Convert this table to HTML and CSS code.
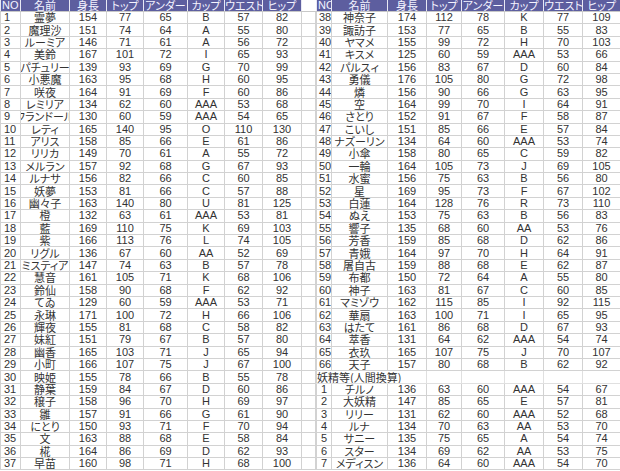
FILE: index.html
```html
<!DOCTYPE html>
<html lang="ja">
<head>
<meta charset="utf-8">
<title>身長表</title>
<link rel="stylesheet" href="styles.css">
</head>
<body>
<div class="sheet">
<table class="tbl left">
<colgroup>
<col class="c-no"><col class="c-nm"><col class="c-h"><col class="c-t"><col class="c-u"><col class="c-c"><col class="c-w"><col class="c-p"><col class="c-gap">
</colgroup>
<thead>
<tr><th class="no">NO</th><th>名前</th><th>身長</th><th>トップ</th><th>アンダー</th><th>カップ</th><th>ウエスト</th><th>ヒップ</th><th class="gap"></th></tr>
</thead>
<tbody>
<tr><td class="no">1</td><td class="nm"><div>霊夢</div></td><td>154</td><td>77</td><td>65</td><td>B</td><td>57</td><td>82</td><td class="gap"></td></tr>
<tr><td class="no">2</td><td class="nm"><div>魔理沙</div></td><td>151</td><td>74</td><td>64</td><td>A</td><td>55</td><td>80</td><td class="gap"></td></tr>
<tr><td class="no">3</td><td class="nm"><div>ルーミア</div></td><td>146</td><td>71</td><td>61</td><td>A</td><td>56</td><td>72</td><td class="gap"></td></tr>
<tr><td class="no">4</td><td class="nm"><div>美鈴</div></td><td>167</td><td>101</td><td>72</td><td>I</td><td>65</td><td>93</td><td class="gap"></td></tr>
<tr><td class="no">5</td><td class="nm"><div>パチュリー</div></td><td>139</td><td>93</td><td>69</td><td>G</td><td>70</td><td>99</td><td class="gap"></td></tr>
<tr><td class="no">6</td><td class="nm"><div>小悪魔</div></td><td>163</td><td>95</td><td>68</td><td>H</td><td>60</td><td>95</td><td class="gap"></td></tr>
<tr><td class="no">7</td><td class="nm"><div>咲夜</div></td><td>164</td><td>91</td><td>69</td><td>F</td><td>60</td><td>86</td><td class="gap"></td></tr>
<tr><td class="no">8</td><td class="nm"><div>レミリア</div></td><td>134</td><td>62</td><td>60</td><td>AAA</td><td>53</td><td>68</td><td class="gap"></td></tr>
<tr><td class="no">9</td><td class="nm"><div>フランドール</div></td><td>130</td><td>60</td><td>59</td><td>AAA</td><td>54</td><td>65</td><td class="gap"></td></tr>
<tr><td class="no">10</td><td class="nm"><div>レティ</div></td><td>165</td><td>140</td><td>95</td><td>O</td><td>110</td><td>130</td><td class="gap"></td></tr>
<tr><td class="no">11</td><td class="nm"><div>アリス</div></td><td>158</td><td>85</td><td>66</td><td>E</td><td>61</td><td>86</td><td class="gap"></td></tr>
<tr><td class="no">12</td><td class="nm"><div>リリカ</div></td><td>149</td><td>70</td><td>61</td><td>A</td><td>55</td><td>72</td><td class="gap"></td></tr>
<tr><td class="no">13</td><td class="nm"><div>メルラン</div></td><td>157</td><td>92</td><td>68</td><td>G</td><td>67</td><td>93</td><td class="gap"></td></tr>
<tr><td class="no">14</td><td class="nm"><div>ルナサ</div></td><td>156</td><td>82</td><td>66</td><td>C</td><td>60</td><td>85</td><td class="gap"></td></tr>
<tr><td class="no">15</td><td class="nm"><div>妖夢</div></td><td>153</td><td>81</td><td>66</td><td>C</td><td>57</td><td>88</td><td class="gap"></td></tr>
<tr><td class="no">16</td><td class="nm"><div>幽々子</div></td><td>163</td><td>140</td><td>80</td><td>U</td><td>81</td><td>125</td><td class="gap"></td></tr>
<tr><td class="no">17</td><td class="nm"><div>橙</div></td><td>132</td><td>63</td><td>61</td><td>AAA</td><td>53</td><td>81</td><td class="gap"></td></tr>
<tr><td class="no">18</td><td class="nm"><div>藍</div></td><td>169</td><td>110</td><td>75</td><td>K</td><td>69</td><td>103</td><td class="gap"></td></tr>
<tr><td class="no">19</td><td class="nm"><div>紫</div></td><td>166</td><td>113</td><td>76</td><td>L</td><td>74</td><td>105</td><td class="gap"></td></tr>
<tr><td class="no">20</td><td class="nm"><div>リグル</div></td><td>136</td><td>67</td><td>60</td><td>AA</td><td>52</td><td>69</td><td class="gap"></td></tr>
<tr><td class="no">21</td><td class="nm"><div>ミスティア</div></td><td>147</td><td>74</td><td>63</td><td>B</td><td>57</td><td>78</td><td class="gap"></td></tr>
<tr><td class="no">22</td><td class="nm"><div>慧音</div></td><td>161</td><td>105</td><td>71</td><td>K</td><td>68</td><td>106</td><td class="gap"></td></tr>
<tr><td class="no">23</td><td class="nm"><div>鈴仙</div></td><td>158</td><td>90</td><td>68</td><td>F</td><td>62</td><td>92</td><td class="gap"></td></tr>
<tr><td class="no">24</td><td class="nm"><div>てゐ</div></td><td>129</td><td>60</td><td>59</td><td>AAA</td><td>53</td><td>71</td><td class="gap"></td></tr>
<tr><td class="no">25</td><td class="nm"><div>永琳</div></td><td>171</td><td>100</td><td>72</td><td>H</td><td>66</td><td>106</td><td class="gap"></td></tr>
<tr><td class="no">26</td><td class="nm"><div>輝夜</div></td><td>155</td><td>81</td><td>68</td><td>C</td><td>58</td><td>82</td><td class="gap"></td></tr>
<tr><td class="no">27</td><td class="nm"><div>妹紅</div></td><td>151</td><td>79</td><td>67</td><td>B</td><td>57</td><td>80</td><td class="gap"></td></tr>
<tr><td class="no">28</td><td class="nm"><div>幽香</div></td><td>165</td><td>103</td><td>71</td><td>J</td><td>65</td><td>94</td><td class="gap"></td></tr>
<tr><td class="no">29</td><td class="nm"><div>小町</div></td><td>166</td><td>107</td><td>75</td><td>J</td><td>67</td><td>100</td><td class="gap"></td></tr>
<tr><td class="no">30</td><td class="nm"><div>映姫</div></td><td>155</td><td>78</td><td>66</td><td>B</td><td>55</td><td>78</td><td class="gap"></td></tr>
<tr><td class="no">31</td><td class="nm"><div>静葉</div></td><td>159</td><td>84</td><td>67</td><td>D</td><td>60</td><td>86</td><td class="gap"></td></tr>
<tr><td class="no">32</td><td class="nm"><div>穣子</div></td><td>158</td><td>96</td><td>70</td><td>H</td><td>69</td><td>97</td><td class="gap"></td></tr>
<tr><td class="no">33</td><td class="nm"><div>雛</div></td><td>157</td><td>91</td><td>66</td><td>G</td><td>61</td><td>90</td><td class="gap"></td></tr>
<tr><td class="no">34</td><td class="nm"><div>にとり</div></td><td>150</td><td>93</td><td>71</td><td>F</td><td>70</td><td>94</td><td class="gap"></td></tr>
<tr><td class="no">35</td><td class="nm"><div>文</div></td><td>163</td><td>88</td><td>68</td><td>E</td><td>58</td><td>84</td><td class="gap"></td></tr>
<tr><td class="no">36</td><td class="nm"><div>椛</div></td><td>164</td><td>86</td><td>69</td><td>D</td><td>62</td><td>93</td><td class="gap"></td></tr>
<tr><td class="no">37</td><td class="nm"><div>早苗</div></td><td>160</td><td>98</td><td>71</td><td>H</td><td>68</td><td>100</td><td class="gap"></td></tr>
</tbody>
</table>
<table class="tbl right">
<colgroup>
<col class="r-no"><col class="r-nm"><col class="r-h"><col class="r-t"><col class="r-u"><col class="r-c"><col class="r-w"><col class="r-p">
</colgroup>
<thead>
<tr><th class="no">NO</th><th>名前</th><th>身長</th><th>トップ</th><th>アンダー</th><th>カップ</th><th>ウエスト</th><th>ヒップ</th></tr>
</thead>
<tbody>
<tr><td class="no">38</td><td class="nm"><div>神奈子</div></td><td>174</td><td>112</td><td>78</td><td>K</td><td>77</td><td>109</td></tr>
<tr><td class="no">39</td><td class="nm"><div>諏訪子</div></td><td>153</td><td>77</td><td>65</td><td>B</td><td>55</td><td>83</td></tr>
<tr><td class="no">40</td><td class="nm"><div>ヤマメ</div></td><td>155</td><td>99</td><td>72</td><td>H</td><td>70</td><td>103</td></tr>
<tr><td class="no">41</td><td class="nm"><div>キスメ</div></td><td>125</td><td>60</td><td>59</td><td>AAA</td><td>53</td><td>66</td></tr>
<tr><td class="no">42</td><td class="nm"><div>パルスィ</div></td><td>156</td><td>83</td><td>67</td><td>D</td><td>60</td><td>84</td></tr>
<tr><td class="no">43</td><td class="nm"><div>勇儀</div></td><td>176</td><td>105</td><td>80</td><td>G</td><td>72</td><td>98</td></tr>
<tr><td class="no">44</td><td class="nm"><div>燐</div></td><td>156</td><td>90</td><td>66</td><td>G</td><td>63</td><td>95</td></tr>
<tr><td class="no">45</td><td class="nm"><div>空</div></td><td>164</td><td>99</td><td>70</td><td>I</td><td>64</td><td>91</td></tr>
<tr><td class="no">46</td><td class="nm"><div>さとり</div></td><td>152</td><td>91</td><td>67</td><td>F</td><td>58</td><td>87</td></tr>
<tr><td class="no">47</td><td class="nm"><div>こいし</div></td><td>151</td><td>85</td><td>66</td><td>E</td><td>57</td><td>84</td></tr>
<tr><td class="no">48</td><td class="nm"><div>ナズーリン</div></td><td>134</td><td>64</td><td>60</td><td>AAA</td><td>53</td><td>74</td></tr>
<tr><td class="no">49</td><td class="nm"><div>小傘</div></td><td>158</td><td>80</td><td>65</td><td>C</td><td>59</td><td>82</td></tr>
<tr><td class="no">50</td><td class="nm"><div>一輪</div></td><td>164</td><td>105</td><td>73</td><td>J</td><td>69</td><td>105</td></tr>
<tr><td class="no">51</td><td class="nm"><div>水蜜</div></td><td>156</td><td>75</td><td>63</td><td>B</td><td>56</td><td>80</td></tr>
<tr><td class="no">52</td><td class="nm"><div>星</div></td><td>169</td><td>95</td><td>73</td><td>F</td><td>67</td><td>102</td></tr>
<tr><td class="no">53</td><td class="nm"><div>白蓮</div></td><td>164</td><td>128</td><td>76</td><td>R</td><td>73</td><td>110</td></tr>
<tr><td class="no">54</td><td class="nm"><div>ぬえ</div></td><td>153</td><td>75</td><td>63</td><td>B</td><td>56</td><td>83</td></tr>
<tr><td class="no">55</td><td class="nm"><div>響子</div></td><td>135</td><td>68</td><td>60</td><td>AA</td><td>53</td><td>76</td></tr>
<tr><td class="no">56</td><td class="nm"><div>芳香</div></td><td>159</td><td>85</td><td>68</td><td>D</td><td>62</td><td>86</td></tr>
<tr><td class="no">57</td><td class="nm"><div>青娥</div></td><td>164</td><td>97</td><td>70</td><td>H</td><td>64</td><td>91</td></tr>
<tr><td class="no">58</td><td class="nm"><div>屠自古</div></td><td>159</td><td>88</td><td>68</td><td>E</td><td>62</td><td>87</td></tr>
<tr><td class="no">59</td><td class="nm"><div>布都</div></td><td>150</td><td>72</td><td>64</td><td>A</td><td>55</td><td>80</td></tr>
<tr><td class="no">60</td><td class="nm"><div>神子</div></td><td>163</td><td>81</td><td>67</td><td>C</td><td>60</td><td>85</td></tr>
<tr><td class="no">61</td><td class="nm"><div>マミゾウ</div></td><td>162</td><td>115</td><td>85</td><td>I</td><td>92</td><td>115</td></tr>
<tr><td class="no">62</td><td class="nm"><div>華扇</div></td><td>163</td><td>100</td><td>71</td><td>I</td><td>65</td><td>95</td></tr>
<tr><td class="no">63</td><td class="nm"><div>はたて</div></td><td>161</td><td>86</td><td>68</td><td>D</td><td>67</td><td>93</td></tr>
<tr><td class="no">64</td><td class="nm"><div>萃香</div></td><td>131</td><td>64</td><td>62</td><td>AAA</td><td>54</td><td>74</td></tr>
<tr><td class="no">65</td><td class="nm"><div>衣玖</div></td><td>165</td><td>107</td><td>75</td><td>J</td><td>70</td><td>107</td></tr>
<tr><td class="no">66</td><td class="nm"><div>天子</div></td><td>157</td><td>80</td><td>68</td><td>B</td><td>62</td><td>92</td></tr>
<tr class="section"><td colspan="3" class="label">妖精等(人間換算)</td><td></td><td></td><td></td><td></td><td></td></tr>
<tr><td class="no fairy">1</td><td class="nm"><div>チルノ</div></td><td>136</td><td>63</td><td>60</td><td>AAA</td><td>54</td><td>67</td></tr>
<tr><td class="no fairy">2</td><td class="nm"><div>大妖精</div></td><td>147</td><td>85</td><td>65</td><td>E</td><td>57</td><td>81</td></tr>
<tr><td class="no fairy">3</td><td class="nm"><div>リリー</div></td><td>131</td><td>62</td><td>60</td><td>AAA</td><td>52</td><td>68</td></tr>
<tr><td class="no fairy">4</td><td class="nm"><div>ルナ</div></td><td>134</td><td>70</td><td>63</td><td>AA</td><td>53</td><td>70</td></tr>
<tr><td class="no fairy">5</td><td class="nm"><div>サニー</div></td><td>135</td><td>75</td><td>65</td><td>A</td><td>54</td><td>74</td></tr>
<tr><td class="no fairy">6</td><td class="nm"><div>スター</div></td><td>134</td><td>69</td><td>62</td><td>AA</td><td>53</td><td>75</td></tr>
<tr><td class="no fairy">7</td><td class="nm"><div>メディスン</div></td><td>136</td><td>64</td><td>60</td><td>AAA</td><td>54</td><td>70</td></tr>
</tbody>
</table>
</div>
</body>
</html>
```
FILE: styles.css
```css
html, body {
  margin: 0;
  padding: 0;
  background: #ffffff;
}

.sheet {
  display: flex;
  align-items: flex-start;
  width: 620px;
  height: 471px;
  overflow: hidden;
  font-family: "Liberation Sans Narrow", "Liberation Sans", "Noto Sans CJK JP", sans-serif;
  font-size: 11px;
  color: #333333;
}

.tbl {
  border-collapse: collapse;
  table-layout: fixed;
  border-spacing: 0;
}

.tbl.left { width: 316px; border-left: 1px dashed #8a8a8a; }
.tbl.right { width: 304px; }

.c-no { width: 20px; }
.c-nm { width: 49px; }
.c-h { width: 37px; }
.c-t { width: 37px; }
.c-u { width: 44px; }
.c-c { width: 37px; }
.c-w { width: 38px; }
.c-p { width: 39px; }
.c-gap { width: 14px; }

.r-no { width: 15px; }
.r-nm { width: 56px; }
.r-h { width: 39px; }
.r-t { width: 35px; }
.r-u { width: 43px; }
.r-c { width: 39px; }
.r-w { width: 39px; }
.r-p { width: 38px; }

.tbl th {
  height: 11px;
  padding: 0;
  background: #5d5e9f;
  color: #f4f4ff;
  font-weight: normal;
  font-family: "Noto Sans CJK JP", "Liberation Sans", sans-serif;
  font-feature-settings: "palt";
  font-size: 11px;
  line-height: 11px;
  text-align: center;
  white-space: nowrap;
  overflow: hidden;
  border-left: 1px solid #e8e8f4;
  border-bottom: 1px solid #c8c8c8;
}

.tbl th.no {
  font-family: "Liberation Sans Narrow", "Liberation Sans", sans-serif;
  text-align: left;
  padding-left: 1px;
  font-size: 11px;
}

.tbl th.gap {
  background: #ffffff;
}

.tbl td {
  height: 11.4px;
  padding: 0;
  line-height: 11px;
  text-align: center;
  white-space: nowrap;
  overflow: hidden;
  border: 1px solid #d2d2d2;
}

.tbl td.no {
  text-align: left;
  padding-left: 3px;
}

.right td.no {
  padding-left: 2px;
}

.right td.no.fairy {
  padding-left: 4px;
}

.tbl td.nm div {
  display: flex;
  justify-content: center;
  overflow: hidden;
  white-space: nowrap;
  height: 11px;
  font-family: "Noto Sans CJK JP", sans-serif;
  font-feature-settings: "palt";
  font-size: 11px;
  line-height: 11px;
}

.tbl .section td {
  border-color: #e0e0e0;
}

.tbl .section td.label {
  text-align: left;
  padding-left: 0;
  font-family: "Noto Sans CJK JP", sans-serif;
  font-feature-settings: "palt";
  border-left-color: #d2d2d2;
}
```
